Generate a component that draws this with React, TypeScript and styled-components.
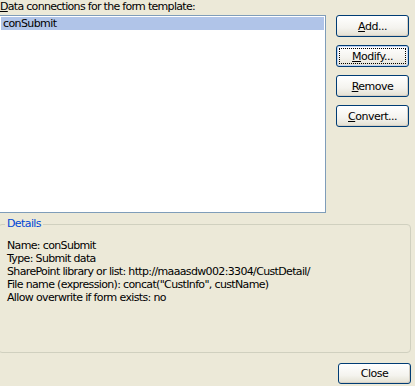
import styled, { createGlobalStyle } from 'styled-components'

const GlobalStyle = createGlobalStyle`
  html, body {
    margin: 0;
    padding: 0;
    background: #ece9d8;
  }
  body {
    font-family: "DejaVu Sans", "Liberation Sans", sans-serif;
    font-size: 11px;
    color: #000;
  }
`

const details = [
  'Name: conSubmit',
  'Type: Submit data',
  'SharePoint library or list: http://maaasdw002:3304/CustDetail/',
  'File name (expression): concat("CustInfo", custName)',
  'Allow overwrite if form exists: no'
]

const App = () => {
  return (
    <Dialog>
      <GlobalStyle />
      <TopRow>
        <ListColumn>
          <Caption>
            <u>D</u>ata connections for the form template:
          </Caption>
          <ListBox>
            <ListItem $selected>conSubmit</ListItem>
          </ListBox>
        </ListColumn>
        <ButtonColumn>
          <Button>
            <u>A</u>dd...
          </Button>
          <Button $focused>
            <u>M</u>odify...
          </Button>
          <Button>
            <u>R</u>emove
          </Button>
          <Button>
            <u>C</u>onvert...
          </Button>
        </ButtonColumn>
      </TopRow>
      <GroupBox>
        <Legend>Details</Legend>
        {details.map((line) => (
          <DetailLine key={line}>{line}</DetailLine>
        ))}
      </GroupBox>
      <Footer>
        <Button>Close</Button>
      </Footer>
    </Dialog>
  )
}

const Dialog = styled.div`
  width: 415px;
  height: 386px;
  display: flex;
  flex-direction: column;
  overflow: hidden;
`

const TopRow = styled.div`
  display: flex;
  gap: 10px;
`

const ListColumn = styled.div`
  display: flex;
  flex-direction: column;
  margin-left: -1px;
`

const Caption = styled.div`
  height: 15px;
  line-height: 13px;
  padding-left: 1px;
  font-size: 11px;
  letter-spacing: -0.7px;
  white-space: nowrap;
`

const ListBox = styled.div`
  width: 327px;
  height: 198px;
  box-sizing: border-box;
  border: 1px solid #7f9db9;
  background: #fff;
  padding: 1px;
`

const ListItem = styled.div<{ $selected?: boolean }>`
  height: 13px;
  line-height: 13px;
  padding-left: 2px;
  background: ${(p) => (p.$selected ? '#b0c4e8' : 'transparent')};
  font-size: 11px;
  letter-spacing: -0.6px;
`

const ButtonColumn = styled.div`
  display: flex;
  flex-direction: column;
  gap: 8px;
  padding-top: 15px;
`

const Button = styled.button<{ $focused?: boolean }>`
  width: 73px;
  height: 22px;
  box-sizing: border-box;
  padding: 0;
  border: 1px solid #003c74;
  border-radius: 3px;
  background: linear-gradient(#ffffff 0%, #f4f3ee 60%, #e3e0d2 100%);
  font-family: "DejaVu Sans", sans-serif;
  font-size: 11px;
  letter-spacing: -0.5px;
  color: #000;
  outline: ${(p) => (p.$focused ? '1px dotted #000' : 'none')};
  outline-offset: -4px;
  box-shadow: ${(p) =>
    p.$focused ? 'inset 0 0 0 1px #c0d4f4' : 'inset -1px -1px 0 #d6d0c5'};

  u {
    text-decoration: underline;
  }
`

const GroupBox = styled.div`
  position: relative;
  margin: 11px 4px 0 -2px;
  height: 129px;
  box-sizing: border-box;
  border: 1px solid #d0d0bf;
  border-radius: 4px;
  padding: 14px 0 0 8px;
  display: flex;
  flex-direction: column;
`

const Legend = styled.span`
  position: absolute;
  top: -8px;
  left: 6px;
  padding: 0 2px;
  background: #ece9d8;
  color: #0046d5;
  font-size: 11px;
  letter-spacing: -0.6px;
  line-height: 14px;
`

const DetailLine = styled.div`
  height: 13px;
  line-height: 13px;
  font-size: 11px;
  letter-spacing: -0.65px;
  white-space: nowrap;
`

const Footer = styled.div`
  display: flex;
  justify-content: flex-end;
  padding: 10px 4px 0 0;

  button {
    height: 21px;
  }
`

export default App
